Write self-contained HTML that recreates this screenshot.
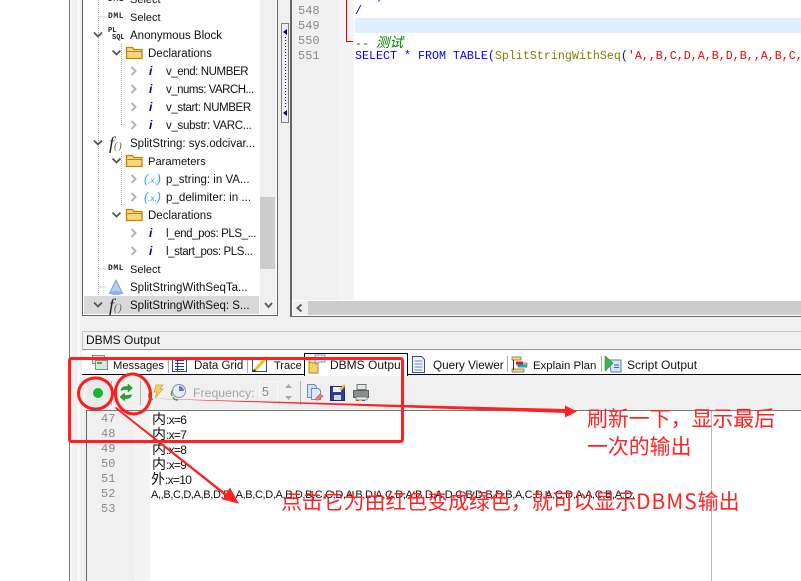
<!DOCTYPE html>
<html><head><meta charset="utf-8">
<style>
html,body{margin:0;padding:0;width:801px;height:581px;overflow:hidden;background:#fff}
body{position:relative;font-family:"Liberation Sans","Noto Sans CJK SC",sans-serif;font-size:11.5px;color:#111}
div,span.a{position:absolute}
.t{white-space:nowrap;line-height:14px;height:14px;margin-top:1px}
.k{font-size:14px;line-height:14px}
.o{font-size:12px;letter-spacing:-.7px;margin-top:0}
.o .k{letter-spacing:0}
.ln{font-family:"Liberation Mono",monospace;font-size:12px;color:#8a8a8a;line-height:14px;white-space:nowrap}
.code{font-family:"Liberation Mono",monospace;font-size:11.67px;line-height:14px;white-space:pre}
.dith{background-color:#f8f8f8;background-image:linear-gradient(45deg,#f0f0f0 25%,transparent 25%,transparent 75%,#f0f0f0 75%),linear-gradient(45deg,#f0f0f0 25%,transparent 25%,transparent 75%,#f0f0f0 75%);background-size:2px 2px;background-position:0 0,1px 1px}
.r{color:#ff2222;font-size:20.9px;line-height:28px;white-space:nowrap;font-family:"Noto Sans CJK SC",sans-serif}
.dml{font:bold 8px 'Liberation Mono',monospace;letter-spacing:.6px;line-height:14px;color:#222;white-space:nowrap}
.fn{font:italic 18px 'Liberation Serif',serif;color:#222;line-height:14px;white-space:nowrap}
.i{font:italic bold 12px 'Liberation Sans',sans-serif;color:#0000a8;line-height:14px}
.x{font:italic 12px 'Liberation Sans',sans-serif;color:#2aa3e8;line-height:14px;white-space:nowrap}
svg{position:absolute;overflow:visible}
</style></head><body>

<!-- window backgrounds -->
<div style="left:69px;top:0;width:732px;height:581px;background:#f0f0f0"></div>
<div style="left:69px;top:0;width:1px;height:581px;background:#777"></div>
<div style="left:70px;top:0;width:2px;height:581px;background:#fafafa"></div>
<div style="left:77px;top:0;width:3px;height:581px;background:#fafafa"></div>

<!-- tree box -->
<div style="left:82px;top:-2px;width:194px;height:316px;border:1px solid #666;background:#fff"></div>
<div style="left:260px;top:-1px;width:16px;height:315px;background:#f0f0f0"></div>
<div style="left:260px;top:197px;width:15px;height:72px;background:#cdcdcd"></div>
<div style="left:84px;top:296px;width:175px;height:18px;background:#d9d9d9"></div>
<svg style="left:264px;top:302px" width="10" height="7"><path d="M1 1L4.500 5L8 1" fill="none" stroke="#606060" stroke-width="2"/></svg>

<!-- tree dotted lines -->
<svg style="left:84px;top:0" width="180" height="316">
<g stroke="#aaa" stroke-dasharray="1 1" fill="none">
<path d="M14.500 0V296M14.500 17H22M14.500 269H22M14.500 287H22M37.500 44V125M37.500 152V205"/>
</g>
<g fill="none" stroke="#555" stroke-width="1.800">
<path d="M10 32.500l4 4 4-4M10 140.500l4 4 4-4M10 302.500l4 4 4-4M28.500 50.500l4 4 4-4M28.500 158.500l4 4 4-4M28.500 212.500l4 4 4-4"/>
</g>
<g fill="none" stroke="#b5b5b5" stroke-width="2">
<path d="M47.500 67l4 4-4 4M47.500 85l4 4-4 4M47.500 103l4 4-4 4M47.500 121l4 4-4 4M47.500 175l4 4-4 4M47.500 193l4 4-4 4M47.500 229l4 4-4 4M47.500 247l4 4-4 4"/>
</g>
<!-- folders -->
<g fill="#f6d77f" stroke="#b8860b" stroke-width="1.300">
<path d="M42.500 58.500V47.500H48.500L50 49.500H58V58.500Z"/>
<path d="M42.500 166.500V155.500H48.500L50 157.500H58V166.500Z"/>
<path d="M42.500 220.500V209.500H48.500L50 211.500H58V220.500Z"/>
</g>
<path d="M43 51.500H58M43 159.500H58M43 213.500H58" stroke="#b8860b" fill="none"/>
<!-- cone -->
<path d="M32 280L38.500 293.500H25.500Z" fill="#b4cdf0" stroke="#7d9fd6"/>
<ellipse cx="32" cy="293" rx="6.500" ry="2" fill="#8fb0e4"/>
</svg>

<!-- DML / PL / f labels -->
<div class="dml" style="left:108px;top:-7px">DML</div>
<div class="dml" style="left:108px;top:10px">DML</div>
<div class="dml" style="left:108px;top:262px">DML</div>
<div style="left:108px;top:26px;font:bold 7px 'Liberation Mono',monospace;line-height:10px;color:#222">PL</div>
<div style="left:112px;top:33px;font:bold 7px 'Liberation Mono',monospace;line-height:10px;color:#222">SQL</div>
<div class="fn" style="left:109px;top:136px">f<span style="font-size:10px;letter-spacing:1px;color:#555">()</span></div>
<div class="fn" style="left:109px;top:298px">f<span style="font-size:10px;letter-spacing:1px;color:#555">()</span></div>
<div class="i" style="left:149px;top:64px">i</div>
<div class="i" style="left:149px;top:82px">i</div>
<div class="i" style="left:149px;top:100px">i</div>
<div class="i" style="left:149px;top:118px">i</div>
<div class="i" style="left:149px;top:226px">i</div>
<div class="i" style="left:149px;top:244px">i</div>
<div class="x" style="left:144px;top:172px">(<span style="font-size:8.500px">,x,</span>)</div>
<div class="x" style="left:144px;top:190px">(<span style="font-size:8.500px">,x,</span>)</div>

<!-- tree text -->
<div class="t" style="left:130px;top:-8px;font-size:11px">Select</div>
<div class="t" style="left:130px;top:10px;font-size:11px">Select</div>
<div class="t" style="left:130px;top:28px">Anonymous Block</div>
<div class="t" style="left:148px;top:46px">Declarations</div>
<div class="t" style="left:166px;top:64px;letter-spacing:-.42px">v_end: NUMBER</div>
<div class="t" style="left:166px;top:82px;letter-spacing:-.5px">v_nums: VARCH...</div>
<div class="t" style="left:166px;top:100px;letter-spacing:-.4px">v_start: NUMBER</div>
<div class="t" style="left:166px;top:118px;letter-spacing:-.3px">v_substr: VARC...</div>
<div class="t" style="left:130px;top:136px">SplitString: sys.odcivar...</div>
<div class="t" style="left:148px;top:154px;font-size:11.2px">Parameters</div>
<div class="t" style="left:166px;top:172px">p_string: in VA...</div>
<div class="t" style="left:166px;top:190px;font-size:11.6px">p_delimiter: in ...</div>
<div class="t" style="left:148px;top:208px">Declarations</div>
<div class="t" style="left:166px;top:226px;letter-spacing:-.4px">l_end_pos: PLS_...</div>
<div class="t" style="left:166px;top:244px;letter-spacing:-.4px">l_start_pos: PLS...</div>
<div class="t" style="left:130px;top:262px;font-size:11px">Select</div>
<div class="t" style="left:130px;top:280px">SplitStringWithSeqTa...</div>
<div class="t" style="left:130px;top:298px">SplitStringWithSeq: S...</div>

<!-- splitter handle -->
<div style="left:281px;top:23px;width:6px;height:98px;border:1px solid #808080;background:#f0f0f0"></div>
<svg style="left:282px;top:23px" width="8" height="100"><path d="M1 9l4-3v6ZM1 90l4-3v6Z" fill="#000080"/><path d="M3.500 14V85" stroke="#000080" stroke-dasharray="1 2"/></svg>

<!-- editor -->
<div style="left:290px;top:-2px;width:511px;height:317px;border:1px solid #666;border-width:1px 0 1px 2px;background:#fff"></div>
<div style="left:292px;top:0;width:46px;height:300px;background:#f0f0f0"></div>
<div class="dith" style="left:338px;top:0;width:16px;height:300px"></div>
<div style="left:355px;top:18px;width:446px;height:15px;background:#e0efff"></div>
<svg style="left:340px;top:0" width="16" height="44"><path d="M6.500 0V41.500H13" fill="none" stroke="#e00000"/></svg>
<div class="ln" style="left:298px;top:4px">548</div>
<div class="ln" style="left:298px;top:19px">549</div>
<div class="ln" style="left:298px;top:34px">550</div>
<div class="ln" style="left:298px;top:49px">551</div>
<div class="code" style="left:355px;top:-11px;color:#0000ff">   )</div>
<div class="code" style="left:355px;top:4px;color:#0000ff">/</div>
<div class="code" style="left:355px;top:34px;color:#008000;font-style:italic">-- <span style="font-family:'Noto Sans CJK SC',sans-serif;font-size:13.5px">测试</span></div>
<div class="code" style="left:355px;top:49px;width:446px;overflow:hidden;color:#0000ff">SELECT * FROM TABLE(<span style="color:#808000">SplitStringWithSeq</span>(<span style="color:#f00000">'A,,B,C,D,A,B,D,B,,A,B,C,D</span></div>

<!-- h scrollbar -->
<div style="left:292px;top:300px;width:509px;height:1px;background:#fff"></div>
<div style="left:293px;top:301px;width:15px;height:14px;background:#f0f0f0"></div>
<div style="left:308px;top:301px;width:493px;height:14px;background:#cdcdcd"></div>
<svg style="left:295px;top:303px" width="10" height="10"><path d="M6.500 1.500L2.500 5L6.500 8.500" fill="none" stroke="#606060" stroke-width="2"/></svg>

<!-- DBMS Output title -->
<div style="left:82px;top:331px;width:719px;height:17px;border-top:1px solid #c4c4c4;border-left:1px solid #c4c4c4;border-bottom:1px solid #9a9a9a;background:#f0f0f0"></div>
<div class="t" style="left:86px;top:332px;font-size:12px">DBMS Output</div>

<!-- tabs -->
<div style="left:82px;top:351px;width:719px;height:23px;background:#fff"></div>
<div style="left:82px;top:374px;width:719px;height:1px;background:#000"></div>
<div style="left:304px;top:353px;width:102px;height:22px;border:1px solid #000;border-bottom:0;background:#fff"></div>
<div style="left:168px;top:357px;width:1px;height:16px;background:#aaa"></div>
<div style="left:247px;top:357px;width:1px;height:16px;background:#aaa"></div>
<div style="left:507px;top:356px;width:1px;height:16px;background:#aaa"></div>
<div style="left:601px;top:356px;width:1px;height:16px;background:#aaa"></div>
<div class="t" style="left:113px;top:358px;font-size:11.2px">Messages</div>
<div class="t" style="left:194px;top:358px;font-size:11.5px">Data Grid</div>
<div class="t" style="left:274px;top:358px;font-size:11px">Trace</div>
<div class="t" style="left:330px;top:357px;font-size:12px">DBMS Output</div>
<div class="t" style="left:433px;top:358px;font-size:11.7px">Query Viewer</div>
<div class="t" style="left:533px;top:358px;font-size:11.4px">Explain Plan</div>
<div class="t" style="left:627px;top:357px;font-size:12px">Script Output</div>

<!-- tab icons -->
<svg style="left:0;top:0" width="801" height="581">
<!-- messages -->
<rect x="92.500" y="355.500" width="12" height="8" fill="#e3e8f0" stroke="#7c8a96"/>
<rect x="95.500" y="360.500" width="12" height="9" fill="#d7e8d9" stroke="#7c8a96"/>
<rect x="97" y="362" width="5" height="2" fill="#4aa35a"/>
<!-- data grid -->
<rect x="172.500" y="357.500" width="14" height="14" fill="#fff" stroke="#3c4a88"/>
<path d="M175 360.500h9M175 363.500h9M175 366.500h9M175 369.500h9" stroke="#2b3c8f"/><path d="M177.500 358v13" stroke="#2b3c8f"/>
<!-- trace -->
<rect x="252.500" y="357.500" width="14" height="14" fill="#fff" stroke="#3c4a88"/>
<path d="M255 370L267 357" stroke="#f0c020" stroke-width="3"/><path d="M253 372l3-1-2-2Z" fill="#000"/>
<!-- dbms -->
<path d="M309 361h9v12h-9Z" fill="#f4d36a" stroke="#b58b1e"/>
<ellipse cx="313.500" cy="361" rx="4.500" ry="2" fill="#fbe9a8" stroke="#b58b1e"/>
<path d="M315 355h10v7h-6l-3 2v-2h-1Z" fill="#eef3fb" stroke="#7f97bf"/>
<!-- query viewer -->
<path d="M412.500 356.500h9l3 3v13h-12Z" fill="#f3f6fc" stroke="#36508f"/>
<path d="M414.500 361h8M414.500 364h8M414.500 367h8M414.500 370h8" stroke="#6c86bd"/>
<!-- explain plan -->
<path d="M512 357h9v3h-9ZM517 363h10v3h-10ZM512 369h12v3h-12Z" fill="#f4d98a" stroke="#7a6a30" stroke-width=".7"/>
<path d="M516 361.500h7v3h-7Z" fill="#c8231f"/><path d="M518 364.500h9v3h-9Z" fill="#19a3c9"/>
<path d="M513.500 360v10" stroke="#333"/>
<!-- script -->
<path d="M609 360h12v12h-10Z" fill="#d7e5f6" stroke="#607fb0"/>
<path d="M605 356l8 7-8 8Z" fill="#3db54a" stroke="#2a8a36" stroke-width=".6"/>
<path d="M614 365h5M614 367.500h5" stroke="#3d68b0"/>

<!-- toolbar -->
<rect x="87" y="380" width="23" height="26" fill="#e9e9e9"/>
<circle cx="98" cy="393" r="5" fill="#12b52c"/>
<path d="M111.500 381v24M140.500 381v24M300.500 381v24" stroke="#b5b5b5"/>
<!-- refresh -->
<path d="M121 390.500c0-3 2.500-4 5-4h2v-2.500l4.500 4-4.500 4v-2.500h-2c-2 0-3.500.300-5 1Z" fill="#22a52e" stroke="#18801f" stroke-width=".5"/>
<path d="M131.500 394.500c0 3-2.500 4-5 4h-2v2.500l-4.500-4 4.500-4v2.500h2c2 0 3.500-.300 5-1Z" fill="#22a52e" stroke="#18801f" stroke-width=".5"/>
<!-- lightning disabled -->
<path d="M156 385h7l-3 4h3l-8 9 2-6h-3Z" fill="#f3d560" stroke="#c8a53a" stroke-width=".7"/>
<path d="M149 393c-1 3 0 5 2 6M151 397l-1 3 3-1" fill="none" stroke="#57a860" stroke-width="1.500"/>
<!-- clock -->
<circle cx="179" cy="391" r="6.500" fill="#e6ecf6" stroke="#8492ad"/>
<path d="M179 391v-5a5 5 0 0 1 5 5Z" fill="#5f7ec0"/>
<path d="M173 390c-2 2-2 4-1 6M173 397c1 2 3 3 5 3" fill="none" stroke="#4fa558" stroke-width="1.500"/>
<!-- spin -->
<rect x="259.500" y="381.500" width="18" height="23" fill="#f0f0f0" stroke="#fafafa"/>
<path d="M288.500 384l3.500 4h-7ZM288.500 400l3.500-4h-7Z" fill="#a8a8a8"/>
<!-- clear -->
<path d="M307.500 384.500h7l2 2v11h-9Z" fill="#cfe0f4" stroke="#6d8fbe"/>
<path d="M311.500 388.500h7l2 2v9h-9Z" fill="#dfeafa" stroke="#6d8fbe"/>
<path d="M316 398l4-4 3 2-4 4h-3Z" fill="#ef7e72" stroke="#c9584e" stroke-width=".6"/>
<!-- save -->
<rect x="330.500" y="386.500" width="14" height="14" fill="#2a3f9a" stroke="#1c2a70"/>
<rect x="333" y="387" width="8" height="5" fill="#f0f3fb"/><rect x="334" y="395" width="7" height="5" fill="#cfd6e8"/>
<path d="M340 390l5-5" stroke="#e8b93a" stroke-width="2.500"/>
<!-- print -->
<rect x="357" y="384.500" width="9" height="5" fill="#e8e8e8" stroke="#777"/>
<rect x="353.500" y="390.500" width="15" height="7" fill="#8a8f94" stroke="#5a5f64"/>
<rect x="356" y="397" width="11" height="3" fill="#e8e8e8" stroke="#666" stroke-width=".6"/>
<path d="M356 400.500h3" stroke="#e04040"/><path d="M359 400.500h3" stroke="#e8c020"/><path d="M362 400.500h3" stroke="#3060c0"/>
</svg>

<div class="t" style="left:193px;top:385px;color:#a4a4a4;font-size:12.3px">Frequency:</div>
<div class="t" style="left:262px;top:384px;color:#888;font-size:12.5px">5</div>

<!-- output -->
<div style="left:86px;top:410px;width:715px;height:171px;background:#fff"></div>
<div style="left:86px;top:410px;width:715px;height:1px;background:#777"></div>
<div style="left:86px;top:410px;width:1px;height:171px;background:#666"></div>
<div style="left:87px;top:411px;width:47px;height:170px;background:#f0f0f0"></div>
<div class="dith" style="left:134px;top:411px;width:16px;height:170px"></div>
<div style="left:711px;top:411px;width:1px;height:170px;background:#bbb"></div>
<div class="ln" style="left:101px;top:412px">47</div>
<div class="ln" style="left:101px;top:427px">48</div>
<div class="ln" style="left:101px;top:442px">49</div>
<div class="ln" style="left:101px;top:457px">50</div>
<div class="ln" style="left:101px;top:472px">51</div>
<div class="ln" style="left:101px;top:487px">52</div>
<div class="ln" style="left:101px;top:502px">53</div>
<div class="t o" style="left:152px;top:412px"><span class="k">内</span>:x=6</div>
<div class="t o" style="left:152px;top:427px"><span class="k">内</span>:x=7</div>
<div class="t o" style="left:152px;top:442px"><span class="k">内</span>:x=8</div>
<div class="t o" style="left:152px;top:457px"><span class="k">内</span>:x=9</div>
<div class="t o" style="left:151px;top:472px"><span class="k">外</span>:x=10</div>
<div class="t" style="left:151px;top:487px;font-size:11px;letter-spacing:-.36px">A,,B,C,D,A,B,D,B,,A,B,C,D,A,B,D,B,C,C,D,A,B,D,A,C,D,A,B,D,A,D,C,B,D,B,D,B,A,C,D,A,C,D,A,A,C,B,A,D,</div>

<!-- annotations -->
<svg style="left:0;top:0" width="801" height="581">
<rect x="69.500" y="358.500" width="333" height="83" rx="2" fill="none" stroke="#ff2020" stroke-width="3"/>
<ellipse cx="95.500" cy="393.500" rx="17" ry="15.500" fill="none" stroke="#ff1c1c" stroke-width="3"/>
<ellipse cx="133" cy="394" rx="17.500" ry="20" fill="none" stroke="#ff1c1c" stroke-width="3" transform="rotate(-10 133 394)"/>
<path d="M148 398.500L565 409L565 405.500L577 411.500L565 417.500L565 413Z" fill="#ff2020"/>
<path d="M116 407.500L226 494L230 488.500L238 503L223 499L226 496L116 408.500Z" fill="#ff2020" stroke="#ff2020"/>
</svg>
<div class="r" style="left:587px;top:404px">刷新一下，显示最后</div>
<div class="r" style="left:587px;top:432px">一次的输出</div>
<div class="r" style="left:281px;top:487px">点击它为由红色变成绿色，就可以显示<span style="letter-spacing:1px">DBMS</span>输出</div>
</body></html>
